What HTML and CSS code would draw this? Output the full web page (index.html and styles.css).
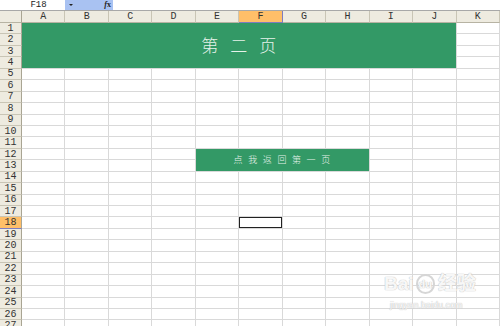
FILE: index.html
```html
<!DOCTYPE html>
<html lang="zh-CN">
<head>
    <meta charset="UTF-8">
    <title>第二页</title>
    <link rel="stylesheet" href="styles.css">
</head>
<body>
    <div class="formula-bar">
        <div class="name-box">F18</div>
        <div class="name-drop">
            <span class="arrow"></span>
            <span class="fx"><i>f</i>x</span>
        </div>
        <div class="formula-input"></div>
    </div>

    <table class="sheet">
        <colgroup>
            <col class="c-head">
            <col span="11" class="c-col">
        </colgroup>
        <tr class="col-head"><th class="corner"></th><th>A</th><th>B</th><th>C</th><th>D</th><th>E</th><th class="sel">F</th><th>G</th><th>H</th><th>I</th><th>J</th><th>K</th></tr>
        <tr><th>1</th><td class="banner" colspan="10" rowspan="4">第二页</td><td></td></tr>
        <tr><th>2</th><td></td></tr>
        <tr><th>3</th><td></td></tr>
        <tr><th>4</th><td></td></tr>
        <tr><th>5</th><td></td><td></td><td></td><td></td><td></td><td></td><td></td><td></td><td></td><td></td><td></td></tr>
        <tr><th>6</th><td></td><td></td><td></td><td></td><td></td><td></td><td></td><td></td><td></td><td></td><td></td></tr>
        <tr><th>7</th><td></td><td></td><td></td><td></td><td></td><td></td><td></td><td></td><td></td><td></td><td></td></tr>
        <tr><th>8</th><td></td><td></td><td></td><td></td><td></td><td></td><td></td><td></td><td></td><td></td><td></td></tr>
        <tr><th>9</th><td></td><td></td><td></td><td></td><td></td><td></td><td></td><td></td><td></td><td></td><td></td></tr>
        <tr><th>10</th><td></td><td></td><td></td><td></td><td></td><td></td><td></td><td></td><td></td><td></td><td></td></tr>
        <tr><th>11</th><td></td><td></td><td></td><td></td><td></td><td></td><td></td><td></td><td></td><td></td><td></td></tr>
        <tr><th>12</th><td></td><td></td><td></td><td></td><td class="link-btn" colspan="4" rowspan="2">点我返回第一页</td><td></td><td></td><td></td></tr>
        <tr><th>13</th><td></td><td></td><td></td><td></td><td></td><td></td><td></td></tr>
        <tr><th>14</th><td></td><td></td><td></td><td></td><td></td><td></td><td></td><td></td><td></td><td></td><td></td></tr>
        <tr><th>15</th><td></td><td></td><td></td><td></td><td></td><td></td><td></td><td></td><td></td><td></td><td></td></tr>
        <tr><th>16</th><td></td><td></td><td></td><td></td><td></td><td></td><td></td><td></td><td></td><td></td><td></td></tr>
        <tr><th>17</th><td></td><td></td><td></td><td></td><td></td><td></td><td></td><td></td><td></td><td></td><td></td></tr>
        <tr><th class="sel">18</th><td></td><td></td><td></td><td></td><td></td><td class="active"></td><td></td><td></td><td></td><td></td><td></td></tr>
        <tr><th>19</th><td></td><td></td><td></td><td></td><td></td><td></td><td></td><td></td><td></td><td></td><td></td></tr>
        <tr><th>20</th><td></td><td></td><td></td><td></td><td></td><td></td><td></td><td></td><td></td><td></td><td></td></tr>
        <tr><th>21</th><td></td><td></td><td></td><td></td><td></td><td></td><td></td><td></td><td></td><td></td><td></td></tr>
        <tr><th>22</th><td></td><td></td><td></td><td></td><td></td><td></td><td></td><td></td><td></td><td></td><td></td></tr>
        <tr><th>23</th><td></td><td></td><td></td><td></td><td></td><td></td><td></td><td></td><td></td><td></td><td></td></tr>
        <tr><th>24</th><td></td><td></td><td></td><td></td><td></td><td></td><td></td><td></td><td></td><td></td><td></td></tr>
        <tr><th>25</th><td></td><td></td><td></td><td></td><td></td><td></td><td></td><td></td><td></td><td></td><td></td></tr>
        <tr><th>26</th><td></td><td></td><td></td><td></td><td></td><td></td><td></td><td></td><td></td><td></td><td></td></tr>
        <tr><th>27</th><td></td><td></td><td></td><td></td><td></td><td></td><td></td><td></td><td></td><td></td><td></td></tr>
    </table>

    <!-- watermark sits over the sheet -->
    <div class="watermark">
        <div class="wm-logo">Bai<span class="wm-du">du</span>经验</div>
        <div class="wm-url">jingyan.baidu.com</div>
    </div>
</body>
</html>
```

FILE: styles.css
```css
body {
    margin: 0;
    width: 500px;
    height: 326px;
    overflow: hidden;
    background: #fff;
    font-family: "Liberation Mono", "DejaVu Sans Mono", monospace;
    position: relative;
}

/* name box / formula bar */
.formula-bar {
    display: flex;
    height: 10px;
    border-bottom: 1px solid #a8a8a8;
    font-size: 9px;
    line-height: 10px;
    color: #222;
}
.name-box {
    width: 65px;
    text-align: center;
    padding-left: 12px;
    box-sizing: border-box;
}
.name-drop {
    width: 48px;
    background: #a9c2f2;
    display: flex;
    align-items: center;
    justify-content: space-between;
    padding: 0 2px 0 4px;
    box-sizing: border-box;
}
.arrow {
    width: 0;
    height: 0;
    border-left: 2px solid transparent;
    border-right: 2px solid transparent;
    border-top: 2px solid #222;
}
.fx {
    font-family: "Liberation Serif", serif;
    font-size: 8px;
    font-weight: bold;
}
.formula-input {
    flex: 1;
}

/* sheet grid */
.sheet {
    border-collapse: separate;
    border-spacing: 0;
    table-layout: fixed;
    width: 500px;
}
.c-head {
    width: 22px;
}
.c-col {
    width: 43.45px;
}
.sheet tr {
    height: 11.45px;
}
.sheet th,
.sheet td {
    padding: 0;
    box-sizing: border-box;
    border-right: 1px solid #d9d9d9;
    border-bottom: 1px solid #d9d9d9;
    line-height: 9px;
    overflow: hidden;
    white-space: nowrap;
}
.sheet th {
    background: #eeebe0;
    font-weight: normal;
    font-size: 10px;
    color: #333;
    border-color: #c9c5b5;
    text-align: center;
}
.col-head th {
    height: 12px;
    border-bottom-color: #b7b3a3;
}
.sheet tr > th:first-child {
    border-right-color: #a9a593;
}
.sheet th.sel {
    background: #ffbf69;
    border-right-color: #7d7cc0;
    border-bottom-color: #7d7cc0;
}

/* green blocks */
.banner,
.link-btn {
    background: #339966;
    color: #e6f2ea;
    text-align: center;
    font-family: "Noto Sans CJK SC", sans-serif;
    font-weight: 300;
}
.banner {
    font-size: 17px;
    letter-spacing: 12px;
    padding-left: 12px !important;
    line-height: 20px !important;
}
.link-btn {
    font-size: 9px;
    letter-spacing: 5.6px;
    padding-left: 5px !important;
    line-height: 10px !important;
}

/* selected cell F18 */
.sheet td.active {
    position: relative;
}
.sheet td.active::after {
    content: "";
    position: absolute;
    left: -1px;
    top: -1px;
    right: -1px;
    bottom: -1px;
    border: 2px solid #222;
}
.sheet td.active::before {
    content: "";
    position: absolute;
    right: -2px;
    bottom: -2px;
    width: 3px;
    height: 3px;
    background: #222;
    z-index: 1;
}

/* baidu watermark */
.watermark {
    position: absolute;
    left: 384px;
    top: 272px;
    width: 92px;
    white-space: nowrap;
    color: rgba(255, 255, 255, 0.9);
    text-shadow: 0 0 1px #c4c4c4, 0 0 1px #c4c4c4;
    font-family: "Liberation Sans", "Noto Sans CJK SC", sans-serif;
}
.wm-logo {
    display: flex;
    align-items: center;
    font-size: 19px;
    font-weight: bold;
    line-height: 24px;
}
.wm-du {
    font-size: 11px;
    border: 2px solid #d6d6d6;
    border-radius: 50%;
    width: 18px;
    height: 16px;
    line-height: 16px;
    text-align: center;
    margin: 0 3px 0 2px;
}
.wm-url {
    font-size: 9px;
    line-height: 12px;
    padding: 3px 0 0 6px;
}
```
